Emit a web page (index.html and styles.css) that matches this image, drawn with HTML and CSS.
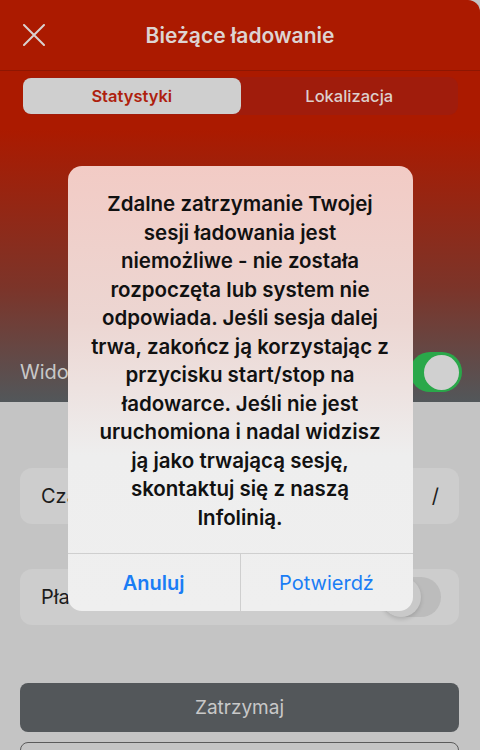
FILE: index.html
```html
<!DOCTYPE html>
<html lang="pl">

<head>
  <meta charset="UTF-8" />
  <title>Bieżące ładowanie</title>
  <link rel="stylesheet" href="styles.css">
</head>

<body>

  <div class="app">
    <div class="header">
      <svg class="close" width="22" height="22" viewBox="0 0 22 22">
        <path d="M1 1 L21 21 M21 1 L1 21" stroke="#d9d2d0" stroke-width="2" stroke-linecap="round" />
      </svg>
      <h1 class="title">Bieżące ładowanie</h1>
    </div>

    <div class="tabs-bar">
      <div class="tabs">
        <div class="tab active">Statystyki</div>
        <div class="tab">Lokalizacja</div>
      </div>
    </div>

    <div class="hero">
      <div class="hero-row">
        <span class="hero-label">Widoczność sesji</span>
        <div class="switch on"><div class="knob"></div></div>
      </div>
    </div>

    <div class="content">
      <div class="card">
        <span>Czas ładowania</span>
        <span>/</span>
      </div>
      <div class="card">
        <span>Płatność automatyczna</span>
        <div class="switch off"><div class="knob"></div></div>
      </div>
      <button class="btn-stop">Zatrzymaj</button>
      <button class="btn-outline">Szczegóły</button>
    </div>
  </div>

  <div class="overlay">
    <div class="alert">
      <p class="alert-text">
        Zdalne zatrzymanie Twojej<br>
        sesji ładowania jest<br>
        niemożliwe - nie została<br>
        rozpoczęta lub system nie<br>
        odpowiada. Jeśli sesja dalej<br>
        trwa, zakończ ją korzystając z<br>
        przycisku start/stop na<br>
        ładowarce. Jeśli nie jest<br>
        uruchomiona i nadal widzisz<br>
        ją jako trwającą sesję,<br>
        skontaktuj się z naszą<br>
        Infolinią.
      </p>
      <div class="alert-actions">
        <button class="alert-btn bold">Anuluj</button>
        <button class="alert-btn">Potwierdź</button>
      </div>
    </div>
  </div>

</body>

</html>
```

FILE: styles.css
```css
body {
  margin: 0;
  width: 480px;
  height: 750px;
  overflow: hidden;
  font-family: Inter, "Noto Sans", sans-serif;
  background: #c4c4c4;
  position: relative;
}

.app {
  height: 750px;
  display: flex;
  flex-direction: column;
  border-top-right-radius: 12px;
  overflow: hidden;
}

.app > div {
  flex-shrink: 0;
}

.header {
  height: 70px;
  background: #ab1a00;
  border-bottom: 1px solid #8e1602;
  display: flex;
  align-items: center;
  justify-content: center;
  position: relative;
}

.close {
  position: absolute;
  left: 23px;
  top: 24px;
}

.title {
  margin: 0;
  font-size: 21px;
  font-weight: 600;
  color: #ddd4d2;
}

.tabs-bar {
  background: #ab1a00;
  padding: 6px 22px 0 23px;
}

.tabs {
  display: flex;
  background: #a01c0c;
  border-radius: 9px;
  height: 38px;
  padding: 1px 0;
  box-sizing: border-box;
}

.tab {
  flex: 1;
  display: flex;
  align-items: center;
  justify-content: center;
  font-size: 16.5px;
  font-weight: 500;
  color: #ddcfcc;
  border-radius: 8px;
}

.tab.active {
  background: #cfcfcf;
  color: #ae1f0e;
  font-weight: 600;
}

.hero {
  height: 287px;
  background: linear-gradient(#ab1a00 5%, #7c3429 60%, #52575a 100%);
  display: flex;
  flex-direction: column;
  justify-content: flex-end;
  padding: 0 18px 10px 20px;
  box-sizing: border-box;
}

.hero-row {
  display: flex;
  align-items: center;
  justify-content: space-between;
}

.hero-label {
  font-size: 20px;
  color: #c8c8c8;
}

.switch {
  width: 52px;
  height: 40px;
  border-radius: 20px;
  display: flex;
  align-items: center;
  padding: 0 3px;
  box-sizing: border-box;
}

.switch.on {
  background: #2aa84a;
  justify-content: flex-end;
}

.switch.off {
  width: 60px;
  background: #bcbcbc;
  padding: 0;
}

.knob {
  width: 35px;
  height: 35px;
  border-radius: 50%;
  background: #d0d0d0;
}

.switch.off .knob {
  width: 40px;
  height: 40px;
  background: #c9c9c9;
  box-shadow: 0 2px 4px rgba(0, 0, 0, 0.15);
}

.content {
  flex: 1;
  padding: 66px 21px 0 20px;
  display: flex;
  flex-direction: column;
}

.card {
  height: 56px;
  flex-shrink: 0;
  background: #cdcdcd;
  border-radius: 12px;
  display: flex;
  align-items: center;
  justify-content: space-between;
  padding: 0 20px 0 21px;
  font-size: 20px;
  color: #1c1c1c;
  margin-bottom: 45px;
}

.card:nth-child(2) {
  padding-right: 18px;
  margin-bottom: 58px;
}

.btn-stop {
  height: 49px;
  flex-shrink: 0;
  background: #53575a;
  border: none;
  border-radius: 8px;
  color: #c8c8c8;
  font-family: inherit;
  font-size: 19px;
  margin-bottom: 10px;
}

.btn-outline {
  height: 60px;
  flex-shrink: 0;
  background: transparent;
  border: 1px solid #5a5a5a;
  border-radius: 8px;
  color: #53575a;
  font-family: inherit;
  font-size: 19px;
}

.overlay {
  position: absolute;
  inset: 0;
  display: flex;
  justify-content: center;
  padding-top: 166px;
  box-sizing: border-box;
  align-items: flex-start;
}

.alert {
  width: 345px;
  border-radius: 14px;
  overflow: hidden;
  background: linear-gradient(#f2cbc5 0%, #ecd6d2 35%, #eeeeee 65%, #efefef 100%);
}

.alert-text {
  margin: 0;
  padding: 24px 8px 21px;
  text-align: center;
  font-size: 20.5px;
  line-height: 28.5px;
  font-weight: 600;
  color: #111;
}

.alert-actions {
  display: flex;
  border-top: 1px solid #cfcfcf;
  height: 57px;
}

.alert-btn {
  flex: 1;
  border: none;
  background: transparent;
  font-family: inherit;
  font-size: 20px;
  color: #1a7df5;
}

.alert-btn + .alert-btn {
  border-left: 1px solid #cfcfcf;
}

.alert-btn.bold {
  font-weight: 600;
}
```
